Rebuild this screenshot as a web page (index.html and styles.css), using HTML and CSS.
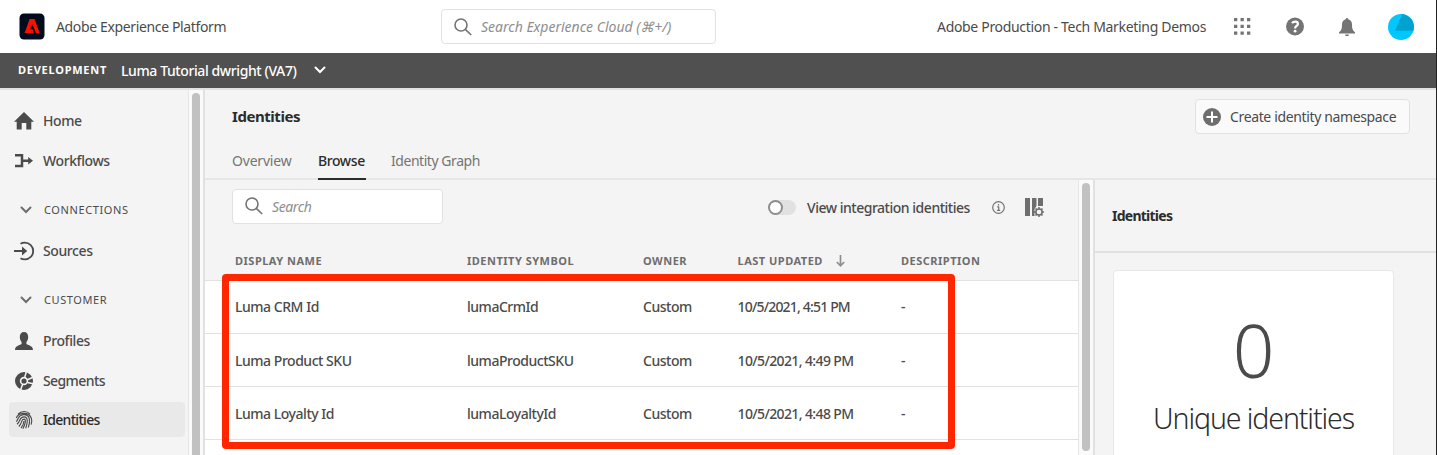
FILE: index.html
```html
<!DOCTYPE html>
<html lang="en">
<head>
<meta charset="utf-8">
<title>Identities</title>
<link rel="stylesheet" href="styles.css">
</head>
<body>
<div class="app">
  <header class="topbar">
    <svg class="logo" viewBox="0 0 26 27"><rect x=".5" y=".5" width="25" height="26" rx="4.5" fill="#000b1d"/><path d="M10.600 6h4.900l5.200 14h-3.800L13.400 11.200 11.200 16.300h2.400l1.300 3.700H5.600z" fill="#fa0f00"/></svg>
    <span class="product"><span class="t">Adobe Experience Platform</span></span>
    <div class="search global">
      <svg viewBox="0 0 18 18"><circle cx="7" cy="7" r="6" /><path d="m11.300 11.300 5.900 5.700"/></svg>
      <span class="t">Search Experience Cloud (⌘+/)</span>
    </div>
    <span class="org"><span class="t">Adobe Production - Tech Marketing Demos</span></span>
    <svg class="ic apps" viewBox="0 0 18 18"><path d="M1 0h3.300v3.300H1zM7.500 0h3.300v3.300H7.500zM14 0h3.300v3.300H14zM1 6.800h3.300v3.300H1zM7.500 6.800h3.300v3.300H7.500zM14 6.800h3.300v3.300H14zM1 13.500h3.300v3.300H1zM7.500 13.500h3.300v3.300H7.500zM14 13.500h3.300v3.300H14z"/></svg>
    <svg class="ic help" viewBox="0 0 18 18"><circle cx="9" cy="8.500" r="9"/><path class="cut" d="M6 5.200C6.900 4 8 3.600 9.200 3.600c1.700 0 2.700 1 2.700 2.300 0 2.100-2.800 2.100-2.800 4.600"/><circle cx="9.100" cy="13.200" r="1.400" fill="#fff"/></svg>
    <svg class="ic bell" viewBox="0 0 18 18"><path d="M9 0c.8 0 1.200.6 1.200 1.300C13 2 14 4 14 6.500c0 4.600 1 6.500 3 7.600V15.500H1v-1.400c2-1.100 3-3 3-7.600C4 4 5 2 7.800 1.300 7.800.6 8.200 0 9 0zM7 16.500h4c0 1-.9 1.700-2 1.700s-2-.7-2-1.700z"/></svg>
    <svg class="avatar" viewBox="0 0 26 26"><circle cx="13" cy="13" r="13" fill="#00c8ff"/><path d="M13.800 1 7 16.700h18.400A13 13 0 0 0 13.800 0z" fill="#00a3cf"/></svg>
  </header>
  <div class="sandbox">
    <span class="env"><span class="t">DEVELOPMENT</span></span><span class="sbname"><span class="t">Luma Tutorial dwright (VA7)</span></span>
    <svg class="chev" viewBox="0 0 12 8"><path d="m1.500 1.500 4.500 4.500 4.500-4.500"/></svg>
  </div>
  <div class="body">
    <nav class="nav">
      <div class="item"><svg class="ic" viewBox="0 0 20 18"><path d="M10 0 0 9.800h2.700V17.500h5V11h4.600v6.500h5V9.800H20L10 0z"/></svg><span class="t">Home</span></div>
      <div class="item"><svg class="ic line" viewBox="0 0 20 18"><path stroke-width="2.500" d="M1 3.300h7v10.800H1M8 8.700h8"/><path class="fill" d="m14.200 4.900 4.800 3.800-4.800 3.800z"/></svg><span class="t">Workflows</span></div>
      <div class="group"><svg class="chev" viewBox="0 0 12 8"><path d="m1.500 1.500 4.500 4.500 4.500-4.500"/></svg><span class="t">CONNECTIONS</span></div>
      <div class="item"><svg class="ic line" viewBox="0 0 20 18"><path stroke-width="1.800" d="M6.500 1.700C8 .8 9.300.6 10.800.6a8.400 8.400 0 0 1 0 16.800c-1.500 0-2.800-.2-4.300-1.100M0 9h10"/><path class="fill" d="m8 4.600 5.200 4.400-5.200 4.400z"/></svg><span class="t">Sources</span></div>
      <div class="group"><svg class="chev" viewBox="0 0 12 8"><path d="m1.500 1.500 4.500 4.500 4.500-4.500"/></svg><span class="t">CUSTOMER</span></div>
      <div class="item"><svg class="ic" viewBox="0 0 20 18"><path d="M10 0c2.800 0 4.200 2 4.200 5 0 2-.7 3.600-1.800 5v1.700c0 1.200 6.600 1.200 6.600 6.300H1c0-5.100 6.600-5.100 6.600-6.300V10C6.500 8.600 5.800 7 5.800 5c0-3 1.400-5 4.200-5z"/></svg><span class="t">Profiles</span></div>
      <div class="item segments"><svg class="ic line" viewBox="0 0 20 18"><circle cx="10" cy="9" r="6.600" stroke-width="4.800"/><circle class="fill" cx="10" cy="9" r="2.600"/><path class="gap" d="M10.800 5 12.300 0M13 8l6.500-3M13.500 10.500l5.500 1.300M8.600 12.500 6.500 18"/></svg><span class="t">Segments</span></div>
      <div class="item current"><svg class="ic line" viewBox="0 0 20 18"><path stroke-width="1.150" d="M4 3.200C7.200-.4 13-.4 16 3.200M2.300 7c2-5.600 12.200-6.600 15 0 .7 1.900.5 4.200-.2 6.600M2.300 10.700C4.500 8.500 3.800 3.600 10 3.600c6.500 0 6.300 6.800 4.300 12.900M3 13.300c4-3.300 2-7.500 7-7.500 4.600 0 3.600 6.300 1.700 11.600M4.800 15.500C8.600 12 6.900 8.100 10 8.100c2.500 0 1.200 5.600-1.200 9.700M7 17c2.200-2.500 2.700-4.500 3-7"/></svg><span class="t">Identities</span></div>
    </nav>
    <div class="rail"><i></i></div>
    <main class="main">
      <div class="head">
        <div class="title"><span class="t">Identities</span></div>
        <button class="create"><svg viewBox="0 0 18 18"><circle cx="9" cy="9" r="9"/><path d="M9 3.500v11M3.500 9h11"/></svg><span class="t">Create identity namespace</span></button>
      </div>
      <div class="tabs"><a class="tab overview"><span class="t">Overview</span></a><a class="tab active"><span class="t">Browse</span></a><a class="tab graph"><span class="t">Identity Graph</span></a></div>
      <div class="content">
        <section class="browse">
          <div class="tools">
            <div class="search local"><svg viewBox="0 0 18 18"><circle cx="7" cy="7" r="6" /><path d="m11.300 11.300 5.900 5.700"/></svg><span class="t">Search</span></div>
            <span class="switch"><i></i></span><span class="switch-label"><span class="t">View integration identities</span></span>
            <svg class="info" viewBox="0 0 13 13"><circle cx="6.500" cy="6.500" r="5.800"/><path d="M5.200 5.800h1.500v3.500M5 9.400h3.200M6.500 3v1.500"/></svg>
            <svg class="columns" viewBox="0 0 20 19"><path d="M0 0h5v18H0zM7 0h4.500v8L9.500 11v7H7zM13 0h5v8h-5z"/><circle cx="14" cy="14" r="3.100"/><path class="teeth" d="M14 9v2M14 17v2M9 14h2M17 14h2M10.500 10.500l1.400 1.400M16.100 16.100l1.400 1.400M10.500 17.500l1.400-1.400M16.100 11.900l1.400-1.400"/></svg>
          </div>
          <div class="row header"><span><b class="t">DISPLAY NAME</b></span><span><b class="t">IDENTITY SYMBOL</b></span><span><b class="t">OWNER</b></span><span><b class="t">LAST UPDATED</b><svg class="sort" viewBox="0 0 9 12"><path d="M4.500 0v10M.8 7l3.700 3.800L8.200 7"/></svg></span><span><b class="t">DESCRIPTION</b></span></div>
          <div class="row first"><span>Luma CRM Id</span><span>lumaCrmId</span><span>Custom</span><span class="date">10/5/2021, 4:51 PM</span><span>-</span></div>
          <div class="row"><span>Luma Product SKU</span><span>lumaProductSKU</span><span>Custom</span><span class="date">10/5/2021, 4:49 PM</span><span>-</span></div>
          <div class="row"><span>Luma Loyalty Id</span><span>lumaLoyaltyId</span><span>Custom</span><span class="date">10/5/2021, 4:48 PM</span><span>-</span></div>
          <div class="row"></div>
          <div class="highlight"></div>
        </section>
        <div class="rail short"><i></i></div>
        <aside class="details">
          <div class="details-title"><span class="t">Identities</span></div>
          <div class="card"><div class="count">0</div><div class="caption"><span class="t">Unique identities</span></div></div>
        </aside>
      </div>
    </main>
  </div>
</div>
</body>
</html>
```
FILE: styles.css
```css
* { box-sizing: border-box; }
body { margin: 0; font: 14px/20px "Noto Sans", "Open Sans", sans-serif; letter-spacing: -.4px; color: #4b4b4b; }
svg { display: block; flex: none; overflow: visible; }
.t { white-space: nowrap; }
.app { width: 1437px; height: 455px; overflow: hidden; background: #f4f4f4; border-right: 1px solid #222; display: flex; flex-direction: column; }
.topbar { height: 53px; flex: none; background: #fff; display: flex; align-items: center; padding-left: 19px; }
.logo { width: 26px; height: 27px; }
.product { margin-left: 11px; width: 385px; letter-spacing: -.36px; }
.search { display: flex; align-items: center; border: 1px solid #e1e1e1; border-radius: 4px; background: #fff; height: 35px; font-style: italic; color: #8e8e8e; padding-left: 12px; gap: 9px; }
.search svg { width: 18px; height: 18px; fill: none; stroke: #747474; stroke-width: 1.600; }
.global { width: 275px; letter-spacing: 0; }
.org { margin-left: 221px; width: 296px; letter-spacing: -.32px; }
.ic { fill: #747474; width: 18px; height: 18px; }
.help { margin-left: 35px; }
.help .cut { fill: none; stroke: #fff; stroke-width: 2.200; }
.bell { margin-left: 34px; }
.avatar { width: 26px; height: 26px; margin-left: 32px; }
.sandbox { height: 35px; flex: none; background: #505050; color: #fff; display: flex; align-items: center; padding-left: 18px; }
.env { width: 103px; font-size: 11px; font-weight: 700; letter-spacing: .75px; margin-top: -2px; }
.sbname { width: 193px; font-weight: 500; }
.chev { width: 12px; height: 8px; fill: none; stroke: #6e6e6e; stroke-width: 2; stroke-linecap: round; }
.sandbox .chev { stroke: #fff; margin-top: -1px; }
.body { display: flex; flex: 1; min-height: 0; border-top: 2px solid #e1e1e1; }
.nav { width: 188px; padding: 13px 3px 0 9px; }
.item { display: flex; align-items: center; height: 35px; padding-left: 5px; gap: 9px; margin-bottom: 5px; border-radius: 4px; font-weight: 500; }
.nav .ic { fill: #4b4b4b; width: 20px; }
.nav .line { fill: none; stroke: #4b4b4b; }
.nav .fill { fill: #4b4b4b; stroke: none; }
.nav .gap { stroke: #f4f4f4; stroke-width: 1.500; }
.group { height: 40px; display: flex; align-items: center; gap: 12px; padding-left: 11px; margin: 12px 0 3px; font-size: 11px; letter-spacing: .6px; }
.item.segments { letter-spacing: -.6px; }
.item.current { background: #e9e9e9; color: #2c2c2c; margin-top: -1px; letter-spacing: -.7px; }
.rail { width: 17px; flex: none; background: #fafafa; border-left: 1px solid #e6e6e6; border-right: 2px solid #e1e1e1; padding: 3px 0 0 3px; }
.rail i { display: block; width: 8px; height: 370px; border-radius: 4px; background: #c1c1c1; }
.main { flex: 1; min-width: 0; display: flex; flex-direction: column; }
.head { height: 52px; display: flex; justify-content: space-between; align-items: center; padding: 0 26px 0 27px; flex: none; }
.title { font-size: 15px; font-weight: 700; color: #2c2c2c; letter-spacing: -.45px; margin-top: 0; }
.create { height: 35px; width: 215px; padding: 0 0 0 7px; border: 1px solid #e1e1e1; border-radius: 4px; background: #fafafa; display: flex; align-items: center; gap: 9px; font: inherit; letter-spacing: -.36px; color: #4b4b4b; margin-top: 1px; }
.create svg { width: 18px; fill: #6e6e6e; }
.create path { stroke: #fff; stroke-width: 2; }
.tabs { height: 38px; flex: none; display: flex; border-bottom: 2px solid #e6e6e6; padding-left: 27px; color: #747474; }
.tab { height: 38px; padding-top: 9px; margin-right: 26px; }
.tab.overview { width: 60px; letter-spacing: -.2px; }
.tab.active { width: 48px; color: #2c2c2c; border-bottom: 2px solid #2c2c2c; font-weight: 500; }
.tab.graph { margin-left: -1px; letter-spacing: -.45px; }
.content { flex: 1; min-height: 0; display: flex; }
.browse { width: 873px; position: relative; }
.tools { display: flex; height: 54px; padding-left: 27px; align-items: center; }
.local { width: 211px; margin-top: -2px; }
.local .t { margin-top: 2px; }
.switch { width: 28px; height: 15px; border-radius: 8px; background: #e1e1e1; margin-left: 325px; }
.switch i { display: block; width: 15px; height: 15px; border: 2px solid #8e8e8e; border-radius: 50%; background: #fff; }
.switch-label { margin: 2px 0 0 11px; width: 185px; letter-spacing: -.48px; font-weight: 500; }
.info { width: 13px; fill: none; stroke: #747474; stroke-width: 1.200; }
.columns { width: 20px; height: 19px; margin: 1px 0 0 20px; fill: #6e6e6e; }
.columns circle, .columns .teeth { fill: none; stroke: #6e6e6e; stroke-width: 1.500; }
.row { height: 53px; background: #fff; border-top: 1px solid #e1e1e1; display: grid; grid-template-columns: 232px 176px 94.500px 163.500px 1fr; padding: 2px 0 0 30px; align-items: center; font-weight: 500; letter-spacing: -.47px; }
.row.first { padding-top: 0; }
.date { letter-spacing: -.62px; }
.first .date { letter-spacing: -.82px; }
.row.header { height: 46px; background: none; border: 0; font-size: 11px; color: #6e6e6e; letter-spacing: .5px; padding-top: 7px; }
.header span { display: flex; align-items: center; }
.sort { width: 9px; height: 12px; margin-left: 13px; fill: none; stroke: #8e8e8e; stroke-width: 1.700; }
.highlight { position: absolute; left: 17px; top: 94px; width: 733px; height: 175px; border: 7px solid #ff2600; border-radius: 4px; }
.rail.short i { height: 268px; }
.details { flex: 1; display: flex; flex-direction: column; }
.details-title { height: 73px; flex: none; display: flex; align-items: center; padding-left: 17px; font-weight: 700; color: #2c2c2c; letter-spacing: -.75px; border-bottom: 2px solid #e1e1e1; }
.card { flex: none; margin: 17px 0 0 18px; width: 281px; height: 220px; background: #fff; border: 1px solid #e8e8e8; border-radius: 4px; text-align: center; padding-top: 39px; }
.count { font: 300 73px/80px "Noto Sans", sans-serif; color: #4b4b4b; letter-spacing: 0; }
.caption { font: 300 28.500px/40px "Noto Sans", sans-serif; color: #2c2c2c; margin-top: 8px; letter-spacing: -1.1px; }
```
